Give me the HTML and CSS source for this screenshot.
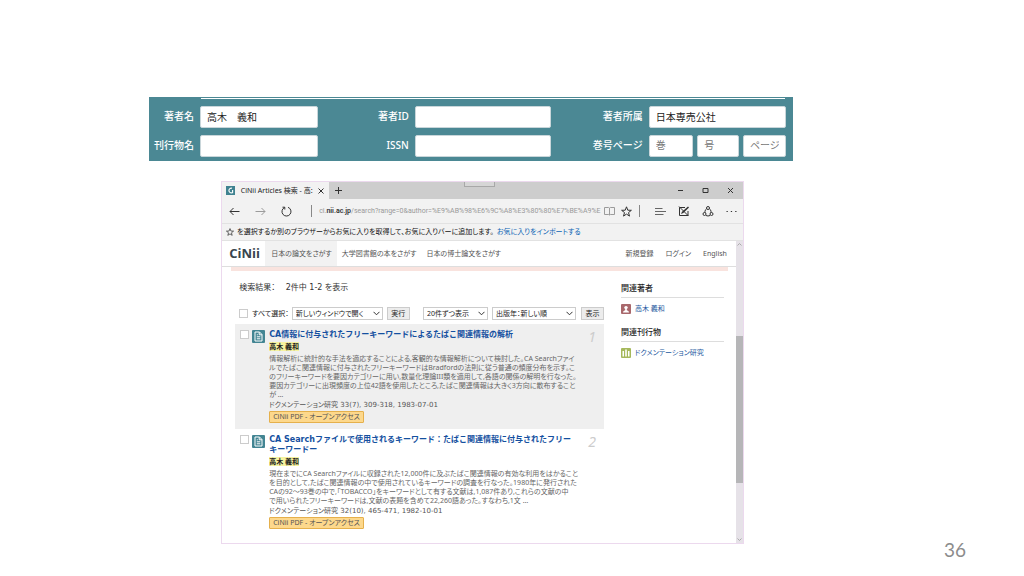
FILE: index.html
```html
<!DOCTYPE html>
<html lang="ja">
<head>
<meta charset="utf-8">
<title>CiNii Articles 検索</title>
<link rel="stylesheet" href="styles.css">
</head>
<body>
<main class="slide">
  <form class="search">
    <label class="search-label" for="author">著者名</label>
    <input class="field" id="author" type="text" value="高木　義和">
    <label class="search-label" for="author-id">著者ID</label>
    <input class="field" id="author-id" type="text">
    <label class="search-label" for="affiliation">著者所属</label>
    <input class="field" id="affiliation" type="text" value="日本専売公社">
    <label class="search-label" for="journal">刊行物名</label>
    <input class="field" id="journal" type="text">
    <label class="search-label" for="issn">ISSN</label>
    <input class="field" id="issn" type="text">
    <label class="search-label" for="volume">巻号ページ</label>
    <div class="field-group">
      <input class="field" id="volume" type="text" placeholder="巻">
      <input class="field" type="text" placeholder="号" aria-label="号">
      <input class="field" type="text" placeholder="ページ" aria-label="ページ">
    </div>
  </form>

  <div class="stage">
  <section class="browser">
    <div class="tabbar">
      <div class="tab">
        <svg class="favicon" viewBox="0 0 9 9"><rect width="9" height="9" fill="#3f8290"/><path d="M6 2.2A2.4 2.4 0 1 0 6 6.8M6.6 4v3.2" fill="none" stroke="#fff" stroke-width="1.1"/></svg>
        <span class="tab-title">CiNii Articles 検索 - 高:</span>
        <button class="icon-btn" type="button" aria-label="タブを閉じる"><svg width="6" height="6" viewBox="0 0 6 6"><path d="M.5.5l5 5M5.5.5l-5 5" class="stroke"/></svg></button>
      </div>
      <button class="icon-btn new-tab" type="button" aria-label="新しいタブ"><svg width="7" height="7" viewBox="0 0 7 7"><path d="M3.5 0v7M0 3.5h7" class="stroke"/></svg></button>
      <span class="grip"></span>
      <div class="window-buttons">
        <button class="icon-btn" type="button" aria-label="最小化"><svg width="7" height="7" viewBox="0 0 7 7"><path d="M1 3.5h5" class="stroke"/></svg></button>
        <button class="icon-btn" type="button" aria-label="最大化"><svg width="7" height="7" viewBox="0 0 7 7"><path d="M1 1.5h5v4H1z" class="stroke"/></svg></button>
        <button class="icon-btn" type="button" aria-label="閉じる"><svg width="7" height="7" viewBox="0 0 7 7"><path d="M1 1l5 5M6 1l-5 5" class="stroke"/></svg></button>
      </div>
    </div>

    <div class="toolbar">
      <button class="icon-btn" type="button" aria-label="戻る"><svg width="11" height="9" viewBox="0 0 11 9"><path d="M10.500 4.500H1M4.500 1L1 4.500 4.500 8" class="stroke"/></svg></button>
      <button class="icon-btn faded" type="button" aria-label="進む"><svg width="11" height="9" viewBox="0 0 11 9"><path d="M.5 4.500H10M6.500 1L10 4.500 6.500 8" class="stroke"/></svg></button>
      <button class="icon-btn" type="button" aria-label="更新"><svg width="11" height="11" viewBox="0 0 11 11"><path d="M7 1.300A4.500 4.500 0 1 1 3.500 1.500M1.500 1.200h2.300v2.300" class="stroke"/></svg></button>
      <span class="divider"></span>
      <div class="url">ci.<b>nii.ac.jp</b>/search?range=0&amp;author=%E9%AB%98%E6%9C%A8%E3%80%80%E7%BE%A9%E</div>
      <button class="icon-btn faded reading" type="button" aria-label="読み取りビュー"><svg width="11" height="10" viewBox="0 0 11 10"><path d="M.5 1.500h4.200l.8.6.8-.6h4.200v7H6.300l-.8.500-.8-.5H.5zM5.500 2v7" class="stroke"/></svg></button>
      <button class="icon-btn star" type="button" aria-label="お気に入り"><svg width="11" height="11" viewBox="0 0 11 11"><path d="M5.500.8l1.300 3.400 3.600.1-2.900 2.300 1 3.500-3-2-3 2 1-3.500L.6 4.300l3.600-.1z" class="stroke"/></svg></button>
      <span class="divider end"></span>
      <button class="icon-btn" type="button" aria-label="ハブ"><svg width="11" height="9" viewBox="0 0 11 9"><path d="M0 1.500h7.500M0 4.500h11M0 7.500h8.500" fill="none" stroke="#666"/></svg></button>
      <button class="icon-btn tool" type="button" aria-label="ノート"><svg width="12" height="11" viewBox="0 0 12 11"><path d="M7 1.500H1.500v8h8.500V5" class="stroke"/><path d="M1 .500L10.500 10" class="stroke"/><path d="M3 8l1-2.300 6-5.200 1 1L5.300 7z" fill="#333"/></svg></button>
      <button class="icon-btn tool" type="button" aria-label="共有"><svg width="12" height="11" viewBox="0 0 12 11"><path d="M3 7C2.500 4.500 4 2.300 6 2.300S9.500 4.500 9 7M4 9.500q2 1 4 0" class="stroke"/><circle cx="6" cy="2" r="1.500" class="stroke knob"/><circle cx="2.500" cy="8" r="1.500" class="stroke knob"/><circle cx="9.500" cy="8" r="1.500" class="stroke knob"/></svg></button>
      <button class="icon-btn tool" type="button" aria-label="その他"><svg width="11" height="3" viewBox="0 0 11 3"><path d="M.5 1.500h1.300M4.800 1.500h1.300M9.200 1.500h1.300" class="stroke"/></svg></button>
    </div>

    <div class="favbar">
      <svg width="8" height="8" viewBox="0 0 11 11"><path d="M5.500.8l1.300 3.400 3.600.1-2.900 2.300 1 3.500-3-2-3 2 1-3.500L.6 4.300l3.600-.1z" class="stroke"/></svg>
      <span>を選択するか別のブラウザーからお気に入りを取得して、お気に入りバーに追加します。</span>
      <a href="#">お気に入りをインポートする</a>
    </div>

    <div class="viewport">
      <div class="page">
        <nav class="nav">
          <a class="logo" href="#">CiNii</a>
          <a class="nav-link current" href="#">日本の論文をさがす</a>
          <a class="nav-link" href="#">大学図書館の本をさがす</a>
          <a class="nav-link" href="#">日本の博士論文をさがす</a>
          <div class="account">
            <a href="#">新規登録</a>
            <a href="#">ログイン</a>
            <a href="#">English</a>
          </div>
        </nav>
        <div class="strip"></div>
        <div class="columns">
          <div class="results">
            <h1 class="count">検索結果：　 2件中 1-2 を表示</h1>
            <div class="controls">
              <input class="check" type="checkbox" id="all">
              <label for="all">すべて選択：</label>
              <span class="select open-in"><select aria-label="開き方"><option>新しいウィンドウで開く</option></select><svg width="7" height="5" viewBox="0 0 7 5"><path d="M.5.800l3 3 3-3" class="stroke"/></svg></span>
              <button class="btn" type="button">実行</button>
              <span class="select per-page"><select aria-label="表示件数"><option>20件ずつ表示</option></select><svg width="7" height="5" viewBox="0 0 7 5"><path d="M.5.800l3 3 3-3" class="stroke"/></svg></span>
              <span class="select order"><select aria-label="並び順"><option>出版年：新しい順</option></select><svg width="7" height="5" viewBox="0 0 7 5"><path d="M.5.800l3 3 3-3" class="stroke"/></svg></span>
              <button class="btn" type="button">表示</button>
            </div>

            <article class="paper shaded">
              <input class="check" type="checkbox" aria-label="1件目を選択">
              <svg class="doc" viewBox="0 0 13 13"><rect width="13" height="13" rx="1" fill="#438593"/><path d="M3 2h4.500L10 4.500V11H3zM7.200 2.200v2.600H10M4.800 6.800h3.500M4.800 8.800h3.500M4.800 4.800h1" fill="none" stroke="#fff" stroke-width="1"/></svg>
              <div class="paper-body">
                <h2 class="title"><a href="#">CA情報に付与されたフリーキーワードによるたばこ関連情報の解析</a></h2>
                <p class="author"><mark>高木 義和</mark></p>
                <p class="abstract">情報解析に統計的な手法を適応することによる,客観的な情報解析について検討した。CA Searchファイ<br>ルでたばこ関連情報に付与されたフリーキーワードはBradfordの法則に従う普通の頻度分布を示す。こ<br>のフリーキーワードを要因カテゴリーに用い,数量化理論III類を適用して,各語の関係の解明を行なった。<br>要因カテゴリーに出現頻度の上位42語を使用したところ,たばこ関連情報は大きく3方向に散布すること<br>が …</p>
                <p class="source">ドクメンテーション研究 33(7), 309-318, 1983-07-01</p>
                <a class="badge" href="#">CiNii PDF - オープンアクセス</a>
              </div>
              <span class="rank">1</span>
            </article>

            <article class="paper">
              <input class="check" type="checkbox" aria-label="2件目を選択">
              <svg class="doc" viewBox="0 0 13 13"><rect width="13" height="13" rx="1" fill="#438593"/><path d="M3 2h4.500L10 4.500V11H3zM7.200 2.200v2.600H10M4.800 6.800h3.500M4.800 8.800h3.500M4.800 4.800h1" fill="none" stroke="#fff" stroke-width="1"/></svg>
              <div class="paper-body">
                <h2 class="title"><a href="#">CA Searchファイルで使用されるキーワード：たばこ関連情報に付与されたフリー<br>キーワードー</a></h2>
                <p class="author"><mark>高木 義和</mark></p>
                <p class="abstract">現在までにCA Searchファイルに収録された12,000件に及ぶたばこ関連情報の有効な利用をはかること<br>を目的として,たばこ関連情報の中で使用されているキーワードの調査を行なった。1980年に発行された<br>CAの92～93巻の中で,「TOBACCO」をキーワードとして有する文献は,1,087件あり,これらの文献の中<br>で用いられたフリーキーワードは,文献の表題を含めて22,260語あった。すなわち,1文 …</p>
                <p class="source">ドクメンテーション研究 32(10), 465-471, 1982-10-01</p>
                <a class="badge" href="#">CiNii PDF - オープンアクセス</a>
              </div>
              <span class="rank">2</span>
            </article>
          </div>

          <aside class="related">
            <h3>関連著者</h3>
            <a href="#"><svg width="10" height="10" viewBox="0 0 10 10"><rect width="10" height="10" rx="1" fill="#a9686c"/><circle cx="5" cy="3.600" r="1.700" fill="#fff"/><path d="M2 8.500c0-1.600 1.500-2 2.200-2.300V5h1.600v1.200C6.500 6.500 8 6.900 8 8.500z" fill="#fff"/></svg>高木 義和</a>
            <h3>関連刊行物</h3>
            <a href="#"><svg width="10" height="10" viewBox="0 0 10 10"><rect width="10" height="10" rx="1" fill="#a5b85c"/><path d="M1.500 3h1.500v5.500H1.500zM4.200 1.500h1.600v7H4.200zM7 3h1.500v5.500H7z" fill="#fff"/></svg>ドクメンテーション研究</a>
          </aside>
        </div>
      </div>
      <div class="scrollbar">
        <svg width="5" height="3" viewBox="0 0 5 3"><path d="M.5 2.500l2-2 2 2" class="arrow"/></svg>
        <span class="track-above"></span>
        <span class="thumb"></span>
        <span class="track-below"></span>
        <svg width="5" height="3" viewBox="0 0 5 3"><path d="M.5.500l2 2 2-2" class="arrow"/></svg>
      </div>
    </div>
  </section>

  <footer class="page-number">36</footer>
  </div>
</main>
</body>
</html>
```
FILE: styles.css
```css
* { box-sizing: border-box; }

body {
  margin: 0;
  background: #fff;
  color: #333;
  font-family: "Noto Sans", "Noto Sans CJK JP", sans-serif;
  font-size: 7px;
  line-height: 10px;
}

h1, h2, h3, p { margin: 0; font-weight: normal; }
a { color: inherit; text-decoration: none; }
svg { display: block; flex: none; }
input, select, button { font: inherit; color: inherit; margin: 0; }

.slide {
  display: flex;
  flex-direction: column;
  min-height: 100vh;
  padding-top: 97px;
}

.stroke { fill: none; stroke: #333; stroke-width: 1; }
.arrow { fill: none; stroke: #aaa; stroke-width: 1; }
.knob { fill: #f2f2f2; }

/* Search form */
.search {
  display: grid;
  grid-template-columns: 45px 118fr 85fr 136fr 86fr 137fr;
  align-items: center;
  gap: 7px 6px;
  margin: 0 22.6% 0 14.55%;
  padding: 9px 7px 4px 0;
  background: linear-gradient(#fff, #fff) 52px 1px / calc(100% - 60px) 1px no-repeat #4b8894;
  font-size: 10px;
  line-height: 14px;
}
.search-label { padding-bottom: 2px; color: #fff; font-weight: 500; text-align: right; white-space: nowrap; justify-self: end; }
.field {
  width: 100%;
  min-width: 0;
  height: 22px;
  padding: 0 6px 2px;
  border: 1px solid #c9d6da;
  border-radius: 2px;
  background: #fff;
  color: #222;
}
.field::placeholder { color: #777; opacity: 1; }
.field-group { display: grid; grid-template-columns: 45fr 42fr 43fr; gap: 4px; }

.stage { display: flex; flex: 1; align-items: flex-start; }

/* Browser window */
.browser {
  flex: 0 0 51.05%;
  min-width: 0;
  margin: 20px 0 0 21.6%;
  border: 1px solid #ecd9ee;
  font-feature-settings: "palt";
  white-space: nowrap;
}
.icon-btn { display: flex; padding: 0; border: 0; background: none; }
.faded { opacity: 0.45; }

.tabbar { position: relative; display: flex; align-items: center; height: 17px; background: #cdcdcd; }
.tab {
  display: flex;
  align-items: center;
  align-self: stretch;
  justify-content: space-between;
  width: 107px;
  padding: 0 5px 0 4px;
  background: #f2f2f2;
}
.favicon { width: 9px; height: 9px; }
.tab-title { color: #222; }
.new-tab { margin-left: 6px; }
.grip {
  position: absolute;
  left: 46.5%;
  top: 0;
  width: 31px;
  height: 5px;
  border: 1px solid #a8a8a8;
  border-top: 0;
  background: #d6d6d6;
}
.window-buttons { display: flex; gap: 18px; margin-left: auto; padding-right: 9px; }

.toolbar { display: flex; align-items: center; gap: 15px; height: 24px; padding: 0 6px 0 7px; background: #f2f2f2; }
.divider { width: 1px; height: 12px; margin-left: 4px; background: #888; }
.url { flex: 1; min-width: 0; margin-left: -8px; color: #999; font-family: Roboto, sans-serif; }
.url b { color: #333; font-weight: 600; }
.reading { margin-left: -8px; }
.star { margin-left: -9px; }
.end { margin-left: -8px; }
.tool { margin-left: -3px; }

.favbar {
  display: flex;
  align-items: center;
  gap: 3px;
  height: 18px;
  padding: 0 4px;
  border-top: 1px solid #e2e2e2;
  border-bottom: 1px solid #e2e2e2;
  background: #f2f2f2;
  color: #111;
}
.favbar a { color: #0a64b4; }

.viewport { display: flex; }
.page { flex: 1; min-width: 0; background: #fff; }

.nav { display: flex; height: 26px; border-bottom: 1px solid #dedede; line-height: 25px; }
.logo { width: 43px; padding-left: 7px; color: #38454d; font-family: "Open Sans", sans-serif; font-size: 13px; font-weight: 700; }
.nav-link { padding: 0 5px; color: #555; }
.current { padding-left: 6px; background: #f2f2f2; }
.account { display: flex; gap: 12px; margin-left: auto; padding-right: 9px; color: #555; }

.strip { height: 4px; margin: 0 8px 0 9px; background: #f9e3de; }

.columns { display: flex; gap: 17px; padding: 12px 12px 8px 13px; }
.results { flex: 1; min-width: 0; }
.count { padding-left: 4px; color: #333; font-family: "DejaVu Sans", "Noto Sans CJK JP", sans-serif; font-size: 8px; }

.check {
  appearance: none;
  width: 9px;
  height: 9px;
  border: 1px solid #ccc;
  background: #fff;
}
.controls { display: flex; align-items: center; height: 13px; margin: 14px 0 4px; padding-left: 4px; color: #222; }
.controls label { padding-left: 4px; }
.select { position: relative; }
.select select {
  appearance: none;
  display: block;
  width: 100%;
  height: 13px;
  padding: 0 3px;
  border: 1px solid #ccc;
  border-radius: 0;
  background: #fff;
}
.select svg { position: absolute; right: 3px; top: 4px; pointer-events: none; }
.open-in { width: 91px; margin: 0 4px 0 3px; }
.per-page { width: 65px; margin: 0 4px 0 auto; }
.order { width: 84px; margin-right: 5px; }
.btn { width: 23px; height: 13px; padding: 0; border: 1px solid #ccc; background: #ececec; }

.paper { display: grid; grid-template-columns: 9px 13px 1fr auto; align-items: start; padding: 6px 8px 6px 5px; }
.shaded { background: #efefef; }
.doc { width: 13px; height: 13px; margin-left: 3px; }
.paper-body { min-width: 0; padding-left: 7px; }
.title {
  color: #1450a0;
  font-family: "DejaVu Sans", "Noto Sans CJK JP", sans-serif;
  font-feature-settings: normal;
  font-size: 8px;
  font-weight: bold;
}
.author { margin: 2px 0; color: #222; font-weight: bold; }
.author mark { background: #f6f3a0; color: inherit; }
.abstract { color: #666; line-height: 9px; }
.source { margin-top: 1px; color: #555; font-family: "DejaVu Sans", "Noto Sans CJK JP", sans-serif; }
.badge {
  display: block;
  width: max-content;
  margin-top: 1px;
  padding: 0 3px;
  border: 1px solid #e5b04c;
  border-radius: 1px;
  background: #fdd88c;
  color: #555;
}
.rank { color: #ccc; font-size: 14px; font-style: italic; line-height: 14px; }

.related { width: 103px; }
.related h3 { margin-bottom: 6px; padding-bottom: 4px; border-bottom: 1px solid #ddd; color: #222; font-size: 8px; font-weight: 500; }
.related a { display: flex; align-items: center; gap: 4px; margin-bottom: 13px; color: #2458a0; }

.scrollbar { display: flex; flex-direction: column; align-items: center; width: 7px; padding: 2px 0; background: #e6e2e8; }
.thumb { flex: 149; width: 100%; background: #b6b6b8; }
.track-above { flex: 91; }
.track-below { flex: 56; }

.page-number {
  align-self: flex-end;
  margin: 0 58px 13px auto;
  color: #8c8c8c;
  font-family: Lato, sans-serif;
  font-size: 19px;
  line-height: 26px;
}
```
